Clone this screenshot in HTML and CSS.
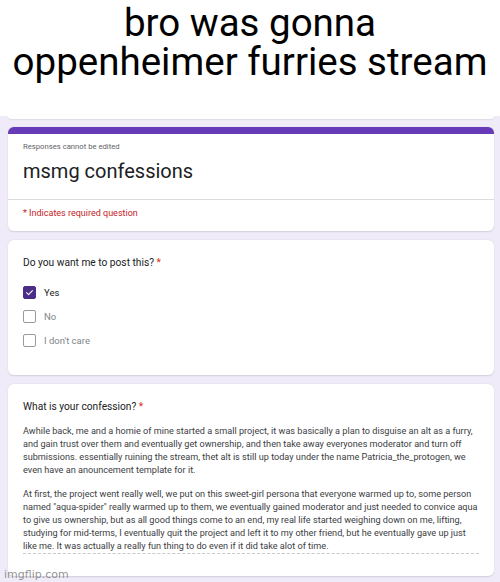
FILE: index.html
```html
<!DOCTYPE html>
<html lang="en">
<head>
    <meta charset="UTF-8">
    <meta name="viewport" content="width=device-width, initial-scale=1.0">
    <title>msmg confessions</title>
    <link rel="stylesheet" href="styles.css">
</head>
<body>
    <div class="caption">bro was gonna<br>oppenheimer furries stream</div>

    <div class="form">
        <div class="card stub"></div>

        <div class="card header">
            <div class="header-top">
                <p class="note">Responses cannot be edited</p>
                <h1 class="title">msmg confessions</h1>
            </div>
            <p class="required-note">* Indicates required question</p>
        </div>

        <div class="card question">
            <p class="q-title">Do you want me to post this? <span class="star">*</span></p>
            <div class="options">
                <label class="option checked">
                    <span class="box">
                        <svg viewBox="0 0 14 14" width="13" height="13"><path d="M3.3 7.2 L5.8 9.6 L10.7 4.6" fill="none" stroke="#fff" stroke-width="1.4" stroke-linecap="round" stroke-linejoin="round"/></svg>
                    </span>
                    <span class="label">Yes</span>
                </label>
                <label class="option">
                    <span class="box"></span>
                    <span class="label">No</span>
                </label>
                <label class="option">
                    <span class="box"></span>
                    <span class="label">I don't care</span>
                </label>
            </div>
        </div>

        <div class="card question">
            <p class="q-title">What is your confession? <span class="star">*</span></p>
            <div class="answer">
                <p>Awhile back, me and a homie of mine started a small project, it was basically a plan to disguise an alt as a furry,<br>and gain trust over them and eventually get ownership, and then take away everyones moderator and turn off<br>submissions. essentially ruining the stream, thet alt is still up today under the name Patricia_the_protogen, we<br>even have an anouncement template for it.</p>
                <p>At first, the project went really well, we put on this sweet-girl persona that everyone warmed up to, some person<br>named "aqua-spider" really warmed up to them, we eventually gained moderator and just needed to convice aqua<br>to give us ownership, but as all good things come to an end, my real life started weighing down on me, lifting,<br>studying for mid-terms, I eventually quit the project and left it to my other friend, but he eventually gave up just<br>like me. It was actually a really fun thing to do even if it did take alot of time.</p>
            </div>
        </div>

        <div class="watermark">imgflip.com</div>
    </div>
</body>
</html>
```

FILE: styles.css
```css
body {
    margin: 0;
    font-family: Roboto, "Liberation Sans", Arial, sans-serif;
    color: #202124;
}
p, h1 {
    margin: 0;
}
.caption {
    height: 113.5px;
    padding-top: 2.5px;
    background: white;
    color: #000;
    font-size: 38.5px;
    line-height: 39px;
    text-align: center;
}
.form {
    position: relative;
    height: 466px;
    background: #efebf8;
    padding: 0 6px 0 8px;
    display: flex;
    flex-direction: column;
    gap: 9px;
}
.card {
    background: white;
    border-radius: 6px;
    box-shadow: 0 0.5px 1.5px rgba(0, 0, 0, 0.12);
    padding: 0 15px;
}
.stub {
    height: 3px;
    border-radius: 0 0 5px 5px;
    margin-bottom: -1px;
}
.header {
    border-top: 7px solid #673ab7;
    padding: 0;
}
.header-top {
    padding: 8px 15px 16px;
    border-bottom: 1px solid #dadce0;
}
.note {
    font-size: 7.7px;
    line-height: 10px;
    color: #5f6368;
}
.title {
    margin-top: 7px;
    font-size: 20px;
    font-weight: 400;
    line-height: 24px;
    color: #202124;
}
.required-note {
    padding: 7px 15px 12px;
    font-size: 9px;
    line-height: 12px;
    color: #c5221f;
}
.question {
    padding-top: 16px;
}
.q-title {
    font-size: 10.2px;
    line-height: 14px;
    color: #202124;
}
.star {
    color: #d93025;
}
.options {
    margin-top: 10px;
    padding-bottom: 23px;
}
.option {
    display: flex;
    align-items: center;
    height: 24px;
}
.box {
    width: 13px;
    height: 13px;
    box-sizing: border-box;
    border: 1.5px solid #9a9a9a;
    border-radius: 2px;
    display: flex;
    align-items: center;
    justify-content: center;
}
.option.checked .box {
    background: #4b2c87;
    border-color: #4b2c87;
}
.label {
    margin-left: 8px;
    font-size: 9.5px;
    color: #80868b;
}
.option.checked .label {
    color: #202124;
}
.answer {
    margin-top: 11px;
    padding-bottom: 22px;
    font-size: 9.15px;
    line-height: 13px;
    color: #3c4043;
    white-space: nowrap;
}
.answer p + p {
    margin-top: 10.5px;
}
.answer p:last-child {
    border-bottom: 1px dashed #c8c8c8;
}
.watermark {
    position: absolute;
    left: 4px;
    bottom: 1px;
    font-family: "DejaVu Sans", sans-serif;
    font-size: 11px;
    color: rgba(120, 120, 120, 0.8);
}
```
